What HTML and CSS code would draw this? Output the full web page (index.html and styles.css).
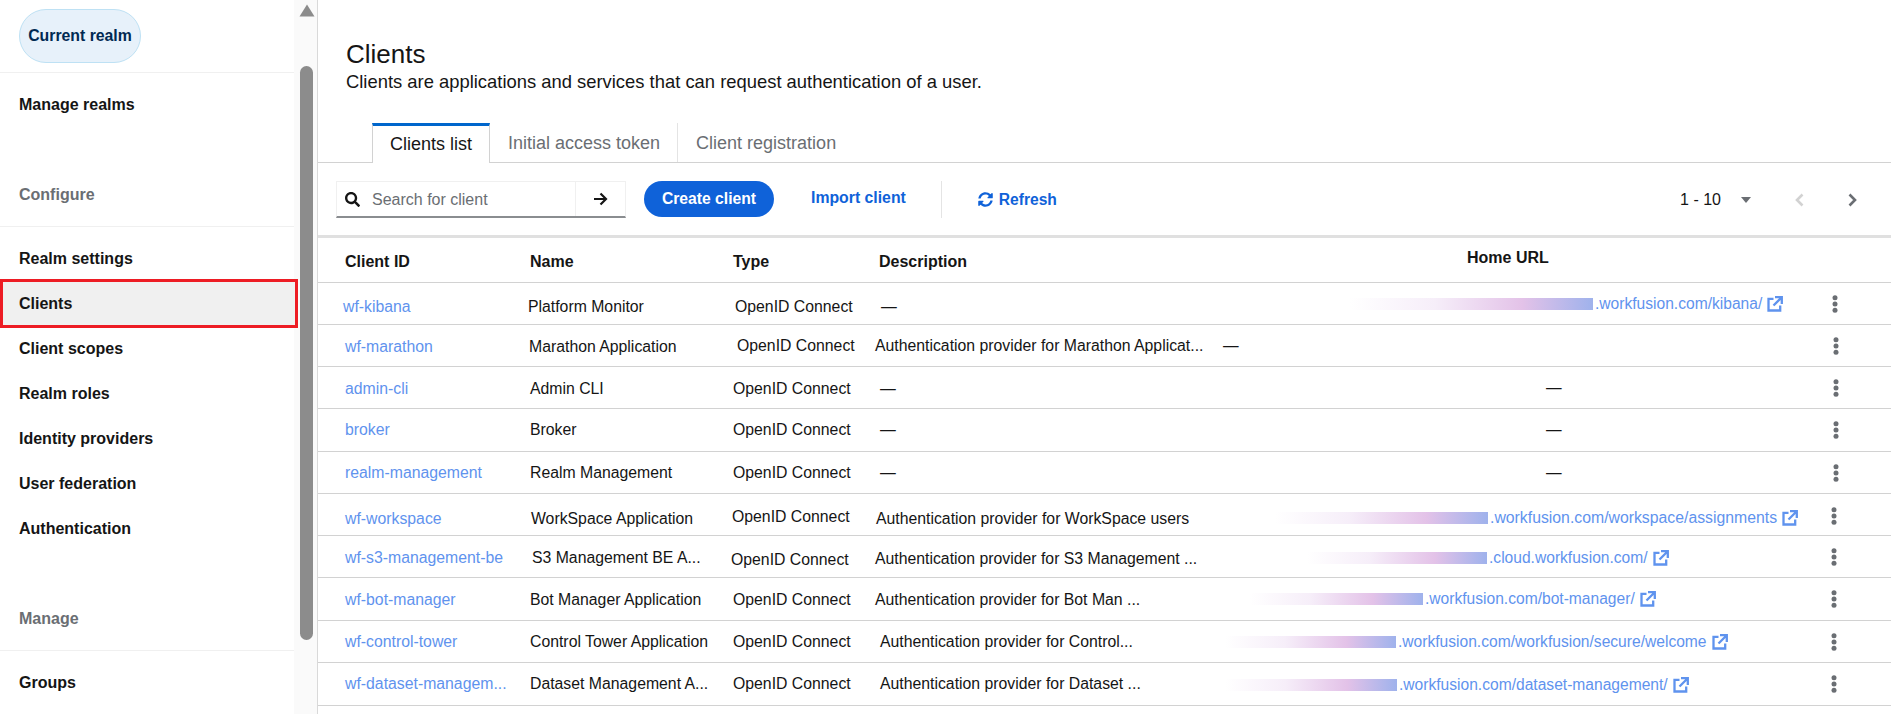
FILE: index.html
```html
<!DOCTYPE html>
<html lang="en">
<head>
<meta charset="utf-8">
<title>Clients</title>
<link rel="stylesheet" href="styles.css">
</head>
<body>
<div class="app">
  <aside class="sidebar">
    <nav class="nav">
      <div class="realm-box"><span class="realm-pill">Current realm</span></div>
      <a class="nav-item first">Manage realms</a>
      <div class="nav-group">Configure</div>
      <a class="nav-item">Realm settings</a>
      <a class="nav-item active">Clients</a>
      <a class="nav-item">Client scopes</a>
      <a class="nav-item">Realm roles</a>
      <a class="nav-item">Identity providers</a>
      <a class="nav-item">User federation</a>
      <a class="nav-item">Authentication</a>
      <div class="nav-group manage">Manage</div>
      <a class="nav-item">Groups</a>
    </nav>
    <div class="scrollbar">
      <svg class="scroll-up" width="16" height="13" viewBox="0 0 16 13"><path d="M8 .5 15.5 12.5H.5z"/></svg>
      <div class="thumb"></div>
    </div>
  </aside>
  <main class="main">
    <header class="page-head">
      <h1>Clients</h1>
      <p>Clients are applications and services that can request authentication of a user.</p>
    </header>
    <div class="tabs">
      <a class="tab on">Clients list</a>
      <a class="tab">Initial access token</a>
      <a class="tab last">Client registration</a>
    </div>
    <div class="toolbar">
      <div class="search">
        <svg class="ico-search" width="15" height="15" viewBox="0 0 512 512"><path d="M505 442.7L405.3 343c-4.5-4.5-10.6-7-17-7H372c27.6-35.3 44-79.7 44-128C416 93.1 322.9 0 208 0S0 93.1 0 208s93.1 208 208 208c48.3 0 92.7-16.4 128-44v16.3c0 6.4 2.5 12.5 7 17l99.7 99.7c9.4 9.4 24.6 9.4 33.9 0l28.3-28.3c9.4-9.4 9.4-24.6.1-34zM208 336c-70.7 0-128-57.2-128-128 0-70.7 57.2-128 128-128 70.7 0 128 57.2 128 128 0 70.7-57.2 128-128 128z"/></svg>
        <span class="placeholder">Search for client</span>
        <span class="search-go"><svg width="15" height="14" viewBox="0 0 15 14"><path d="M1 7h12M7.500 1.500 13 7l-5.500 5.500" fill="none" stroke="#151515" stroke-width="2.200"/></svg></span>
      </div>
      <a class="btn-primary">Create client</a>
      <a class="btn-link">Import client</a>
      <span class="tool-sep"></span>
      <a class="btn-refresh"><svg width="15" height="15" viewBox="0 0 512 512"><path d="M370.72 133.28C339.458 104.008 298.888 87.962 255.848 88c-77.458.068-144.328 53.178-162.791 126.85-1.344 5.363-6.122 9.15-11.651 9.15H24.103c-7.498 0-13.194-6.807-11.807-14.176C33.933 94.924 134.813 8 256 8c66.448 0 126.791 26.136 171.315 68.685L463.03 40.97C478.149 25.851 504 36.559 504 57.941V192c0 13.255-10.745 24-24 24H345.941c-21.382 0-32.09-25.851-16.971-40.971l41.75-41.749zM32 296h134.059c21.382 0 32.09 25.851 16.971 40.971l-41.75 41.75c31.262 29.273 71.835 45.319 114.876 45.28 77.418-.07 144.315-53.144 162.787-126.849 1.344-5.363 6.122-9.15 11.651-9.15h57.304c7.498 0 13.194 6.807 11.807 14.176C478.067 417.076 377.187 504 256 504c-66.448 0-126.791-26.136-171.315-68.685L48.97 471.03C33.851 486.149 8 475.441 8 454.059V320c0-13.255 10.745-24 24-24z"/></svg>Refresh</a>
      <div class="pager">
        <span class="pager-count">1 - 10</span>
        <svg class="caret" width="10" height="6" viewBox="0 0 10 6"><path d="M0 0h10L5 6z"/></svg>
        <svg class="chev-l" width="9" height="14" viewBox="0 0 9 14"><path d="M7.500 1.500 2 7l5.500 5.500" fill="none" stroke="#d2d2d2" stroke-width="2.600"/></svg>
        <svg class="chev-r" width="9" height="14" viewBox="0 0 9 14"><path d="M1.500 1.500 7 7l-5.500 5.500" fill="none" stroke="#6a6e73" stroke-width="2.600"/></svg>
      </div>
    </div>
    <section class="table">
      <div class="thead">
        <span>Client ID</span><span>Name</span><span>Type</span><span>Description</span><span class="th-home">Home URL</span>
      </div>

      <div class="row r1">
        <span class="c id"><a>wf-kibana</a></span><span class="c nm">Platform Monitor</span><span class="c ty">OpenID Connect</span><span class="c de">—</span>
        <span class="c ur"><i class="mask"></i><a>.workfusion.com/kibana/</a><svg class="ext" viewBox="0 0 16 16"><use href="#ext"/></svg></span>
        <span class="c ke"><svg class="kebab" viewBox="0 0 6 20"><use href="#keb"/></svg></span>
      </div>
      <div class="row r2">
        <span class="c id"><a>wf-marathon</a></span><span class="c nm">Marathon Application</span><span class="c ty">OpenID Connect</span><span class="c de">Authentication provider for Marathon Applicat...</span>
        <span class="c ur">—</span>
        <span class="c ke"><svg class="kebab" viewBox="0 0 6 20"><use href="#keb"/></svg></span>
      </div>
      <div class="row r3">
        <span class="c id"><a>admin-cli</a></span><span class="c nm">Admin CLI</span><span class="c ty">OpenID Connect</span><span class="c de">—</span>
        <span class="c ur">—</span>
        <span class="c ke"><svg class="kebab" viewBox="0 0 6 20"><use href="#keb"/></svg></span>
      </div>
      <div class="row r4">
        <span class="c id"><a>broker</a></span><span class="c nm">Broker</span><span class="c ty">OpenID Connect</span><span class="c de">—</span>
        <span class="c ur">—</span>
        <span class="c ke"><svg class="kebab" viewBox="0 0 6 20"><use href="#keb"/></svg></span>
      </div>
      <div class="row r5">
        <span class="c id"><a>realm-management</a></span><span class="c nm">Realm Management</span><span class="c ty">OpenID Connect</span><span class="c de">—</span>
        <span class="c ur">—</span>
        <span class="c ke"><svg class="kebab" viewBox="0 0 6 20"><use href="#keb"/></svg></span>
      </div>
      <div class="row r6">
        <span class="c id"><a>wf-workspace</a></span><span class="c nm">WorkSpace Application</span><span class="c ty">OpenID Connect</span><span class="c de">Authentication provider for WorkSpace users</span>
        <span class="c ur"><i class="mask"></i><a>.workfusion.com/workspace/assignments</a><svg class="ext" viewBox="0 0 16 16"><use href="#ext"/></svg></span>
        <span class="c ke"><svg class="kebab" viewBox="0 0 6 20"><use href="#keb"/></svg></span>
      </div>
      <div class="row r7">
        <span class="c id"><a>wf-s3-management-be</a></span><span class="c nm">S3 Management BE A...</span><span class="c ty">OpenID Connect</span><span class="c de">Authentication provider for S3 Management ...</span>
        <span class="c ur"><i class="mask"></i><a>.cloud.workfusion.com/</a><svg class="ext" viewBox="0 0 16 16"><use href="#ext"/></svg></span>
        <span class="c ke"><svg class="kebab" viewBox="0 0 6 20"><use href="#keb"/></svg></span>
      </div>
      <div class="row r8">
        <span class="c id"><a>wf-bot-manager</a></span><span class="c nm">Bot Manager Application</span><span class="c ty">OpenID Connect</span><span class="c de">Authentication provider for Bot Man ...</span>
        <span class="c ur"><i class="mask"></i><a>.workfusion.com/bot-manager/</a><svg class="ext" viewBox="0 0 16 16"><use href="#ext"/></svg></span>
        <span class="c ke"><svg class="kebab" viewBox="0 0 6 20"><use href="#keb"/></svg></span>
      </div>
      <div class="row r9">
        <span class="c id"><a>wf-control-tower</a></span><span class="c nm">Control Tower Application</span><span class="c ty">OpenID Connect</span><span class="c de">Authentication provider for Control...</span>
        <span class="c ur"><i class="mask"></i><a>.workfusion.com/workfusion/secure/welcome</a><svg class="ext" viewBox="0 0 16 16"><use href="#ext"/></svg></span>
        <span class="c ke"><svg class="kebab" viewBox="0 0 6 20"><use href="#keb"/></svg></span>
      </div>
      <div class="row r10">
        <span class="c id"><a>wf-dataset-managem...</a></span><span class="c nm">Dataset Management A...</span><span class="c ty">OpenID Connect</span><span class="c de">Authentication provider for Dataset ...</span>
        <span class="c ur"><i class="mask"></i><a>.workfusion.com/dataset-management/</a><svg class="ext" viewBox="0 0 16 16"><use href="#ext"/></svg></span>
        <span class="c ke"><svg class="kebab" viewBox="0 0 6 20"><use href="#keb"/></svg></span>
      </div>
    </section>
  </main>
</div>
<svg class="defs" width="0" height="0">
  <symbol id="ext" viewBox="0 0 16 16"><path d="M6.500 2.800H1.500v11.700h11.700V9.500M8 1.200h6.800V8M14.500 1.500 6.500 9.500" fill="none" stroke="#5f93ee" stroke-width="2.300"/></symbol>
  <symbol id="keb" viewBox="0 0 6 20"><circle cx="3" cy="3.800" r="2.500"/><circle cx="3" cy="10" r="2.500"/><circle cx="3" cy="16.200" r="2.500"/></symbol>
</svg>
</body>
</html>
```
FILE: styles.css
```css
* { box-sizing: border-box; }
html, body { margin: 0; height: 714px; overflow: hidden; background: #fff; }
body { font-family: "Liberation Sans", Arial, sans-serif; font-size: 16px; color: #151515; }
.defs { display: block; }
.app { display: flex; height: 714px; }

/* sidebar */
.sidebar { width: 318px; flex: none; display: flex; border-right: 1px solid #d9d9d9; }
.nav { width: 294px; flex: none; }
.realm-box { height: 73px; padding: 9px 0 0 19px; border-bottom: 1px solid #f0f0f0; }
.realm-pill { display: flex; align-items: center; justify-content: center; width: 122px; height: 54px; background: #e7f1fa; border: 1px solid #bee1f4; border-radius: 27px; color: #002952; font-weight: 700; font-size: 15.800px; }
.nav-item { display: flex; align-items: center; height: 45px; padding-left: 19px; font-weight: 700; font-size: 16px; color: #151515; }
.nav-item.first { margin-top: 9px; }
.nav-group { display: flex; align-items: center; height: 69px; margin-top: 31px; margin-bottom: 9px; padding: 5px 0 0 19px; font-weight: 700; font-size: 16px; color: #6a6e73; border-bottom: 1px solid #f0f0f0; }
.nav-group.manage { margin-top: 31px; }
.nav-item.active { position: relative; width: 298px; height: 49px; margin: -2px 0 -2px; background: #f0f0f0; border: 3px solid #ed1c24; padding-left: 16px; }
.scrollbar { flex: 1; background: #fafafa; display: flex; flex-direction: column; align-items: center; padding-top: 4px; }
.scroll-up { fill: #8c8c8c; margin-left: 2px; }
.thumb { width: 13px; height: 574px; margin-top: 49px; margin-left: 2px; background: #8c8c8c; border-radius: 7px; }

/* main */
.main { flex: 1; min-width: 0; }
.page-head { height: 123px; padding: 39px 0 0 28px; }
.page-head h1 { margin: 0; font-weight: 400; font-size: 26px; line-height: 30px; }
.page-head p { margin: 0; font-size: 18.400px; line-height: 26px; }
.tabs { display: flex; height: 40px; padding-left: 54px; border-bottom: 1px solid #d2d2d2; font-size: 18px; color: #6a6e73; }
.tab { display: flex; align-items: center; height: 39px; padding: 1px 17px 0 18px; border-right: 1px solid #e4e4e4; }
.tab.on { height: 40px; width: 118px; justify-content: center; color: #151515; background: #fff; border-top: 3px solid #0066cc; border-left: 1px solid #d2d2d2; border-right: 1px solid #d2d2d2; padding: 0; }
.tab.last { border-right: 0; }
.toolbar { display: flex; align-items: flex-start; height: 75px; padding: 18px 0 0 18px; border-bottom: 3px solid #e0e0e0; }
.search { display: flex; align-items: center; width: 290px; height: 37px; border: 1px solid #f0f0f0; border-bottom: 2px solid #8a8d90; padding-left: 8px; }
.ico-search { fill: #151515; flex: none; }
.placeholder { flex: 1; padding: 2px 0 0 12px; font-size: 16px; color: #6a6e73; }
.search-go { display: flex; align-items: center; justify-content: center; width: 50px; height: 100%; border-left: 1px solid #f0f0f0; }
.btn-primary { display: flex; align-items: center; justify-content: center; width: 130px; height: 36px; margin-left: 18px; background: #0f62d9; color: #fff; border-radius: 18px; font-weight: 700; font-size: 15.700px; }
.btn-link { display: flex; align-items: center; height: 33px; margin-left: 37px; color: #0f62d9; font-weight: 700; font-size: 15.800px; }
.tool-sep { width: 1px; height: 37px; margin-left: 35px; background: #e4e4e4; }
.btn-refresh { display: flex; align-items: center; gap: 6px; height: 37px; margin-left: 36px; color: #0f62d9; font-weight: 700; font-size: 15.600px; }
.btn-refresh svg { fill: #0f62d9; }
.pager { display: flex; align-items: center; height: 37px; margin-left: auto; padding-right: 34px; }
.pager-count { font-size: 16px; }
.caret { fill: #6a6e73; margin-left: 20px; }
.chev-l { margin-left: 44px; }
.chev-r { margin-left: 44px; }

/* table */
.table { font-size: 15.800px; }
.thead { display: grid; grid-template-columns: 185px 203px 146px 588px 1fr; height: 45px; padding: 15px 0 0 27px; border-bottom: 1px solid #d2d2d2; font-size: 16px; font-weight: 700; line-height: 18px; }
.th-home { margin-top: -4px; }
.row { display: grid; height: 42px; border-bottom: 1px solid #d2d2d2; --i: 0px; --n: 0px; --t: 0px; --d: 0px; --u: 0px; --k: 0px; }
.c { display: flex; align-items: center; white-space: nowrap; min-width: 0; }
.c a { color: #5f93ee; }
.id { padding-top: var(--i); }
.nm { padding-top: var(--n); }
.ty { padding-top: var(--t); }
.de { padding-top: var(--d); }
.ur { padding-top: var(--u); font-size: 15.600px; }
.ke { padding-top: var(--k); }
.mask { display: block; flex: none; width: var(--g); height: 12px; margin-right: 2px; background: linear-gradient(90deg, #fff 0%, #f6eef9 35%, #e3c2e8 71%, #9fb2ec 100%); }
.ext { width: 16px; height: 16px; flex: none; margin-left: 5px; }
.kebab { width: 8px; height: 20px; fill: #6a6e73; }

.r1 { grid-template-columns: 185px 207px 146px 469px 481px 1fr; padding-left: 25px; --g: 243px; --i: 6px; --n: 6px; --t: 6px; --d: 6px; }
.r2 { grid-template-columns: 184px 208px 138px 348px 609px 1fr; padding-left: 27px; --i: 2px; --n: 2px; --t: -2px; --d: -2px; --k: -6px; }
.r3 { grid-template-columns: 185px 203px 147px 666px 286px 1fr; padding-left: 27px; --i: 2px; --n: 2px; --t: 2px; --d: 2px; --k: -4px; }
.r4 { grid-template-columns: 185px 203px 147px 666px 286px 1fr; padding-left: 27px; height: 43px; --k: -4px; }
.r5 { grid-template-columns: 185px 203px 147px 666px 286px 1fr; padding-left: 27px; --k: -4px; }
.r6 { grid-template-columns: 186px 201px 144px 399px 555px 1fr; padding-left: 27px; --g: 213px; --i: 8px; --n: 8px; --t: 5px; --d: 8px; --u: 7px; --k: 2px; }
.r6 .ur { font-size: 15.800px; }
.r7 { grid-template-columns: 187px 199px 144px 432px 523px 1fr; padding-left: 27px; --g: 180px; --i: 3px; --n: 3px; --t: 6px; --d: 4px; --u: 2px; --k: -4px; }
.r8 { grid-template-columns: 185px 203px 142px 375px 580px 1fr; padding-left: 27px; height: 43px; --g: 173px; --i: 2px; --n: 2px; --t: 2px; --d: 2px; --u: -1px; --k: -5px; }
.r9 { grid-template-columns: 185px 203px 147px 345px 605px 1fr; padding-left: 27px; --g: 171px; --u: -1px; --k: -4px; }
.r10 { grid-template-columns: 185px 203px 147px 345px 605px 1fr; padding-left: 27px; height: 43px; --g: 172px; --u: 2px; --k: -4px; }
```
